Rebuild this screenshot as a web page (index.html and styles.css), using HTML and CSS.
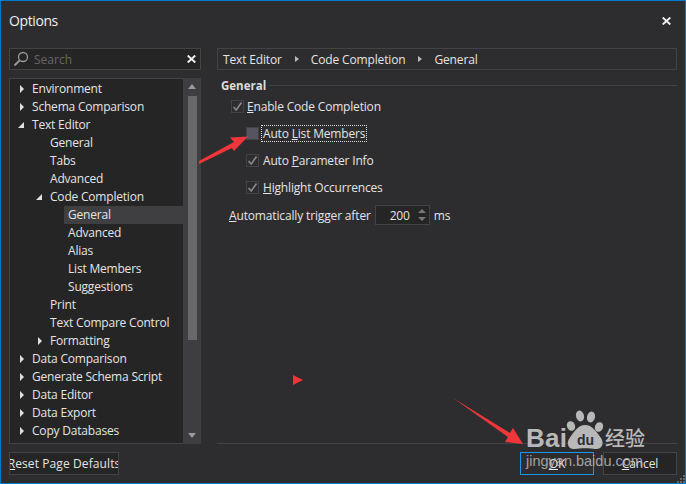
FILE: index.html
```html
<!DOCTYPE html>
<html lang="en">
<head>
<meta charset="utf-8">
<title>Options</title>
<link rel="stylesheet" href="styles.css">
</head>
<body>
<div class="window">
  <header class="titlebar">
    <span class="title">Options</span>
    <svg class="close" width="9" height="8" viewBox="0 0 9 8"><path d="M.7 .5L8.3 7.5M8.3 .5L.7 7.5" stroke="#eee" stroke-width="1.9"/></svg>
  </header>
  <div class="main">
    <aside class="side">
      <div class="search">
        <svg width="16" height="16" viewBox="0 0 16 16"><circle cx="10" cy="6" r="4.5" fill="none" stroke="#999" stroke-width="1.3"/><path d="M6.6 9.4L1.5 14.5" stroke="#999" stroke-width="2"/></svg>
        <span class="search-text">Search</span>
        <svg class="search-x" width="9" height="8" viewBox="0 0 9 8"><path d="M.7 .5L8.3 7.5M8.3 .5L.7 7.5" stroke="#eee" stroke-width="1.9"/></svg>
      </div>
      <div class="treewrap">
        <div class="tree">
          <div class="row l0"><i class="tri"></i>Environment</div>
          <div class="row l0"><i class="tri"></i>Schema Comparison</div>
          <div class="row l0"><i class="tri open"></i>Text Editor</div>
          <div class="row l1"><i class="none"></i>General</div>
          <div class="row l1"><i class="none"></i>Tabs</div>
          <div class="row l1"><i class="none"></i>Advanced</div>
          <div class="row l1"><i class="tri open"></i>Code Completion</div>
          <div class="row l2 sel"><i class="none"></i>General</div>
          <div class="row l2"><i class="none"></i>Advanced</div>
          <div class="row l2"><i class="none"></i>Alias</div>
          <div class="row l2"><i class="none"></i>List Members</div>
          <div class="row l2"><i class="none"></i>Suggestions</div>
          <div class="row l1"><i class="none"></i>Print</div>
          <div class="row l1"><i class="none"></i>Text Compare Control</div>
          <div class="row l1"><i class="tri"></i>Formatting</div>
          <div class="row l0"><i class="tri"></i>Data Comparison</div>
          <div class="row l0"><i class="tri"></i>Generate Schema Script</div>
          <div class="row l0"><i class="tri"></i>Data Editor</div>
          <div class="row l0"><i class="tri"></i>Data Export</div>
          <div class="row l0"><i class="tri"></i>Copy Databases</div>
        </div>
        <div class="scrollbar">
          <i class="sb-up"></i>
          <div class="sb-thumb"></div>
          <i class="sb-down"></i>
        </div>
      </div>
    </aside>
    <section class="content">
      <div class="crumbs">
        <span>Text Editor</span><i class="tri small"></i><span>Code Completion</span><i class="tri small"></i><span>General</span>
      </div>
      <div class="group-head"><b>General</b><span class="rule"></span></div>
      <div class="opt first"><span class="box on"><svg width="11" height="11" viewBox="0 0 11 11"><path d="M1.5 6L4.2 9L9.5 1.5" fill="none" stroke="#8a8a8a" stroke-width="1.6"/></svg></span><span><u>E</u>nable Code Completion</span></div>
      <div class="opt sub"><span class="box blank"></span><span class="focus">Auto <u>L</u>ist Members</span></div>
      <div class="opt sub"><span class="box on"><svg width="11" height="11" viewBox="0 0 11 11"><path d="M1.5 6L4.2 9L9.5 1.5" fill="none" stroke="#8a8a8a" stroke-width="1.6"/></svg></span><span>Auto <u>P</u>arameter Info</span></div>
      <div class="opt sub"><span class="box on"><svg width="11" height="11" viewBox="0 0 11 11"><path d="M1.5 6L4.2 9L9.5 1.5" fill="none" stroke="#8a8a8a" stroke-width="1.6"/></svg></span><span><u>H</u>ighlight Occurrences</span></div>
      <div class="trigger">
        <span><u>A</u>utomatically trigger after</span>
        <div class="spin"><span class="spin-val">200</span><span class="spin-btns"><i class="sp-up"></i><i class="sp-down"></i></span></div>
        <span>ms</span>
      </div>
      <div class="foot-rule"></div>
    </section>
  </div>
  <footer class="foot">
    <button class="btn reset" type="button"><span class="reset-text"><u>R</u>eset Page Defaults</span></button>
    <div class="foot-btns">
      <button class="btn ok" type="button"><u>O</u>K</button>
      <button class="btn" type="button"><u>C</u>ancel</button>
    </div>
  </footer>
  <svg class="grip" width="8" height="8" viewBox="0 0 8 8"><path d="M6 0h2v2H6zM3 3h2v2H3zM6 3h2v2H6zM0 6h2v2H0zM3 6h2v2H3zM6 6h2v2H6z" fill="#666"/></svg>
</div>

<svg class="overlay" width="686" height="484" viewBox="0 0 686 484">
  <path d="M199 161L234 142L230 137.500L248 136.500L234 151L232 148L199 164Z" fill="#f0363a"/>
  <path d="M453 398L510 433L513 428L523 444L505 442L508 437Z" fill="#f0363a"/>
  <path d="M293 375L303 380L293 385Z" fill="#f0363a"/>
  <g fill="#b8b8b8">
    <ellipse cx="580" cy="416" rx="4" ry="5.500" transform="rotate(-15 580 416)"/>
    <ellipse cx="591" cy="417" rx="4" ry="5.500" transform="rotate(15 591 417)"/>
    <ellipse cx="571" cy="426" rx="4" ry="5" transform="rotate(-25 571 426)"/>
    <ellipse cx="599" cy="427" rx="4" ry="5" transform="rotate(25 599 427)"/>
    <path d="M585 425C593 425 597 433 601 438C605 444 601 450 595 449C590 448 580 448 575 449C569 450 566 444 569 439C573 433 578 425 585 425Z"/>
  </g>
</svg>
<div class="wm wm-bai">Bai</div>
<div class="wm wm-du">du</div>
<div class="wm wm-cn">经验</div>
<div class="wm wm-url">jingyan.baidu.com</div>
</body>
</html>
```

FILE: styles.css
```css
* { box-sizing: border-box; }
html, body { margin: 0; padding: 0; }
body {
  width: 686px;
  height: 484px;
  overflow: hidden;
  font-family: "Open Sans", "Liberation Sans", sans-serif;
  font-size: 12px;
  color: #e4e4e4;
  background: #2d2d30;
  position: relative;
}
u { text-underline-offset: 1px; }
.window {
  position: relative;
  width: 686px;
  height: 484px;
  display: flex;
  flex-direction: column;
  background: #2d2d30;
  border: 1px solid #007acc;
  padding: 0 8px 8px 8px;
}
.titlebar {
  height: 47px;
  display: flex;
  justify-content: space-between;
  padding-top: 11px;
  flex: none;
}
.title { font-size: 14px; line-height: 18px; color: #eee; letter-spacing: -.4px; }
.close { margin: 5px 6px 0 0; }
.main { display: flex; flex: 1; min-height: 0; gap: 16px; }
.side { width: 192px; display: flex; flex-direction: column; gap: 8px; flex: none; }
.search {
  height: 22px;
  background: #252526;
  border: 1px solid #434346;
  display: flex;
  align-items: center;
  padding: 0 4px 0 3px;
  flex: none;
}
.search-text { color: #666; margin-left: 5px; flex: 1; }
.treewrap { flex: 1; display: flex; min-height: 0; }
.tree {
  width: 174px;
  background: #252526;
  border: 1px solid #434346;
  border-right: 0;
  padding-top: 1px;
  overflow: hidden;
}
.row {
  height: 18px;
  line-height: 18px;
  display: flex;
  align-items: center;
  white-space: nowrap;
  letter-spacing: -.2px;
}
.row i { flex: none; width: 12px; margin-right: 3px; }
.l0 { padding-left: 7px; }
.l0 i { margin-right: 3px; }
.l1 { padding-left: 25px; }
.l2 { padding-left: 43px; }
.row.sel { background: #3f3f41; margin-left: 54px; padding-left: 4px; }
.sel i { display: none; }
.tri {
  display: block;
  width: 0;
  height: 0;
  position: relative;
}
.tri::after {
  content: "";
  position: absolute;
  left: 3px;
  top: -4px;
  border-style: solid;
  border-width: 4px 0 4px 4px;
  border-color: transparent transparent transparent #e0e0e0;
}
.tri.open::after {
  left: 1px;
  top: -3px;
  border-width: 0 0 6px 6px;
  border-color: transparent transparent #e0e0e0 transparent;
}
.tri.small { width: 4px; margin: 0 12px 0 13px; }
.tri.small::after { left: 0; border-width: 3.5px 0 3.5px 4px; border-left-color: #bbb; top: -3px; }
.scrollbar {
  width: 18px;
  background: #3e3e42;
  display: flex;
  flex-direction: column;
  align-items: center;
  padding-top: 6px;
}
.sb-up, .sb-down { width: 0; height: 0; border-style: solid; flex: none; }
.sb-up { border-width: 0 4px 5px 4px; border-color: transparent transparent #999; }
.sb-down { border-width: 5px 4px 0 4px; border-color: #999 transparent transparent; margin-top: 93px; }
.sb-thumb { width: 9px; height: 244px; background: #686868; flex: none; margin-top: 7px; }
.content { flex: 1; min-width: 0; display: flex; flex-direction: column; }
.crumbs {
  height: 22px;
  border: 1px solid #434346;
  display: flex;
  align-items: center;
  padding-left: 5px;
  white-space: nowrap;
  letter-spacing: -.15px;
  flex: none;
}
.group-head { display: flex; align-items: center; gap: 3px; height: 14px; margin-top: 8px; padding-left: 4px; flex: none; }
.group-head b { font-weight: 700; font-size: 11.5px; color: #ddd; }
.rule { flex: 1; height: 1px; background: #434346; }
.opt { display: flex; align-items: center; height: 15px; letter-spacing: -.18px; white-space: nowrap; flex: none; }
.opt.first { margin-top: 7px; padding-left: 14px; gap: 3px; }
.opt.sub { margin-top: 12px; padding-left: 29px; gap: 4px; }
.box {
  width: 13px;
  height: 13px;
  border: 1px solid #434346;
  background: #2d2d30;
  display: flex;
  align-items: center;
  justify-content: center;
  flex: none;
}
.box.blank { background: #55555f; }
.focus { outline: 1px dotted #ddd; padding: 0 1px; height: 15px; line-height: 15px; margin-left: -1px; }
.trigger { display: flex; align-items: center; height: 20px; margin-top: 10px; padding-left: 12px; gap: 4px; letter-spacing: -.15px; white-space: nowrap; flex: none; }
.spin {
  width: 55px;
  height: 20px;
  background: #252526;
  border: 1px solid #434346;
  display: flex;
  align-items: center;
}
.spin-val { flex: 1; text-align: center; padding-left: 8px; }
.spin-btns { width: 13px; display: flex; flex-direction: column; align-items: center; gap: 4px; }
.sp-up, .sp-down { width: 0; height: 0; border-style: solid; }
.sp-up { border-width: 0 4px 4px; border-color: transparent transparent #777; }
.sp-down { border-width: 4px 4px 0; border-color: #777 transparent transparent; }
.foot-rule { height: 1px; background: #434346; margin-top: auto; margin-bottom: 0; flex: none; }
.foot { display: flex; justify-content: space-between; height: 23px; margin-top: 8px; flex: none; }
.foot-btns { display: flex; gap: 9px; }
.btn {
  width: 74px;
  height: 23px;
  background: #252526;
  border: 1px solid #434346;
  color: #e4e4e4;
  font: inherit;
  letter-spacing: -.1px;
  padding: 0;
  display: flex;
  align-items: center;
  justify-content: center;
}
.btn.reset { width: 110px; overflow: hidden; white-space: nowrap; letter-spacing: .1px; }
.reset-text { flex: none; }
.btn.ok { border-color: #1c97ea; background: #2d2d30; }
.grip { position: absolute; right: 0; bottom: 0; }
.overlay { position: absolute; left: 0; top: 0; pointer-events: none; }
.wm { position: absolute; color: #b8b8b8; white-space: nowrap; font-family: "Liberation Sans", sans-serif; line-height: 1; }
.wm-bai { left: 526px; top: 425px; font-size: 26px; font-weight: 700; letter-spacing: .3px; }
.wm-du { left: 577px; top: 433px; font-size: 14px; font-weight: 700; color: #2d2d30; }
.wm-cn { left: 605px; top: 428px; font-size: 20px; font-family: "Noto Sans CJK SC", sans-serif; font-weight: 500; }
.wm-url { left: 526px; top: 454px; font-size: 14.5px; opacity: .85; }
```
